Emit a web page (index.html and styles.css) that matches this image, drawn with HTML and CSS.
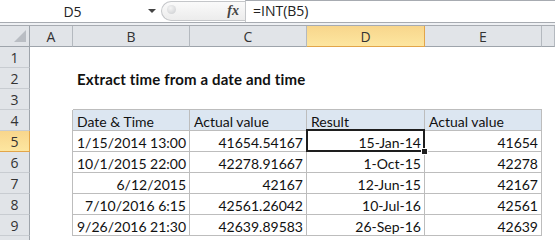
FILE: index.html
```html
<!DOCTYPE html>
<html lang="en">
<head>
  <meta charset="UTF-8" />
  <title>Extract time from a date and time</title>
  <link rel="stylesheet" href="styles.css">
</head>
<body>
  <div class="app">
    <div class="formula-bar">
      <div class="name-box">
        <span class="name">D5</span>
        <span class="caret"></span>
      </div>
      <div class="fx-box">
        <span class="grip"></span>
        <span class="fx">fx</span>
      </div>
      <div class="formula">=INT(B5)</div>
    </div>
    <div class="bar-gap"></div>

    <div class="sheet">
      <!-- column headers -->
      <div class="corner">
        <svg width="12" height="12" viewBox="0 0 12 12"><polygon points="12,0 12,12 0,12" fill="#b9bdc3"/></svg>
      </div>
      <div class="hd">A</div>
      <div class="hd">B</div>
      <div class="hd">C</div>
      <div class="hd sel">D</div>
      <div class="hd">E</div>
      <div class="hd"></div>

      <!-- row 1 -->
      <div class="rh">1</div>
      <div class="c"></div><div class="c"></div><div class="c"></div><div class="c"></div><div class="c"></div><div class="c"></div>

      <!-- row 2 -->
      <div class="rh">2</div>
      <div class="c"></div>
      <div class="c title">Extract time from a date and time</div>
      <div class="c"></div><div class="c"></div><div class="c"></div><div class="c"></div>

      <!-- row 3 -->
      <div class="rh">3</div>
      <div class="c"></div>
      <div class="c above"></div><div class="c above"></div><div class="c above"></div><div class="c above"></div>
      <div class="c"></div>

      <!-- row 4 -->
      <div class="rh">4</div>
      <div class="c before"></div>
      <div class="c t th">Date &amp; Time</div>
      <div class="c t th">Actual value</div>
      <div class="c t th">Result</div>
      <div class="c t th">Actual value</div>
      <div class="c"></div>

      <!-- row 5 -->
      <div class="rh sel">5</div>
      <div class="c before"></div>
      <div class="c t num">1/15/2014 13:00</div>
      <div class="c t num">41654.54167</div>
      <div class="c t num active">15-Jan-14</div>
      <div class="c t num">41654</div>
      <div class="c"></div>

      <!-- row 6 -->
      <div class="rh">6</div>
      <div class="c before"></div>
      <div class="c t num">10/1/2015 22:00</div>
      <div class="c t num">42278.91667</div>
      <div class="c t num">1-Oct-15</div>
      <div class="c t num">42278</div>
      <div class="c"></div>

      <!-- row 7 -->
      <div class="rh">7</div>
      <div class="c before"></div>
      <div class="c t num">6/12/2015</div>
      <div class="c t num">42167</div>
      <div class="c t num">12-Jun-15</div>
      <div class="c t num">42167</div>
      <div class="c"></div>

      <!-- row 8 -->
      <div class="rh">8</div>
      <div class="c before"></div>
      <div class="c t num">7/10/2016 6:15</div>
      <div class="c t num">42561.26042</div>
      <div class="c t num">10-Jul-16</div>
      <div class="c t num">42561</div>
      <div class="c"></div>

      <!-- row 9 -->
      <div class="rh">9</div>
      <div class="c before"></div>
      <div class="c t num">9/26/2016 21:30</div>
      <div class="c t num">42639.89583</div>
      <div class="c t num">26-Sep-16</div>
      <div class="c t num">42639</div>
      <div class="c"></div>

      <!-- row 10 (only its top edge is visible) -->
      <div class="rh"></div>
      <div class="c"></div><div class="c"></div><div class="c"></div><div class="c"></div><div class="c"></div><div class="c"></div>
    </div>
  </div>
</body>
</html>
```

FILE: styles.css
```css
body {
  margin: 0;
  background: white;
  font-family: Lato, "Liberation Sans", sans-serif;
}

.app {
  width: 555px;
  height: 240px;
  overflow: hidden;
}

/* Barre de formule */
.formula-bar {
  display: flex;
  height: 23px;
  box-sizing: border-box;
  border-bottom: 1px solid #a7abb1;
}

.name-box {
  width: 161px;
  display: flex;
  align-items: center;
  flex-shrink: 0;
}

.name {
  width: 145px;
  text-align: center;
  font-family: "Open Sans", sans-serif;
  font-size: 14px;
  color: #222;
}

.caret {
  margin-left: 3px;
  border-left: 4px solid transparent;
  border-right: 4px solid transparent;
  border-top: 4px solid #444;
}

.fx-box {
  width: 84px;
  margin: 1px 0;
  box-sizing: border-box;
  border: 1px solid #c4c6c9;
  border-right: none;
  border-radius: 11px 0 0 11px;
  background: linear-gradient(#fafafa, #ececec);
  display: flex;
  align-items: center;
  justify-content: space-between;
  padding: 0 6px 0 5px;
  flex-shrink: 0;
}

.grip {
  width: 9px;
  height: 9px;
  border-radius: 50%;
  background: radial-gradient(circle at 40% 35%, #f4f4f4, #c9cbce);
  margin-top: -3px;
}

.fx {
  font-family: "Liberation Serif", serif;
  font-style: italic;
  font-weight: bold;
  font-size: 14px;
  color: #444;
}

.formula {
  flex: 1;
  border-left: 1px solid #c4c6c9;
  border-top: 1px solid #a7abb1;
  padding-left: 7px;
  font-family: "Open Sans", sans-serif;
  font-size: 14px;
  line-height: 20px;
  color: #222;
}

.bar-gap {
  height: 3px;
  box-sizing: border-box;
  background: #eef0f3;
  border-bottom: 1px solid #a7abb1;
}

/* Grille */
.sheet {
  display: grid;
  grid-template-columns: 30px 43px 117px 117px 118px 117px 13px;
  grid-auto-rows: 21px;
}

.corner,
.hd,
.rh {
  background: #e1e4e8;
  box-sizing: border-box;
  font-family: "Open Sans", sans-serif;
  font-size: 14px;
  color: #333;
  display: flex;
  align-items: center;
  justify-content: center;
}

.corner {
  border-right: 1px solid #9ea4ab;
  border-bottom: 1px solid #9ea4ab;
  justify-content: flex-end;
  align-items: flex-end;
  padding: 0 3px 4px 0;
}

.hd {
  border-right: 1px solid #b4b9bf;
  border-bottom: 1px solid #9ea4ab;
}

.rh {
  border-right: 1px solid #9ea4ab;
  border-bottom: 1px solid #c8ccd1;
}

.hd.sel,
.rh.sel {
  background: linear-gradient(#f8d68c, #fde6a0);
  border-color: #e2a54a;
}

.c {
  box-sizing: border-box;
  font-size: 14px;
  color: #111;
  padding: 2px 3px 0 4px;
  line-height: 19px;
  white-space: nowrap;
  position: relative;
}

.title {
  font-weight: bold;
  font-size: 15px;
  letter-spacing: 0.15px;
  overflow: visible;
}

/* Bordures du tableau */
.above {
  border-bottom: 1px solid #bdbdbd;
}

.before {
  border-right: 1px solid #bdbdbd;
}

.t {
  border-right: 1px solid #bdbdbd;
  border-bottom: 1px solid #bdbdbd;
}

.th {
  background: #dce6f1;
}

.num {
  text-align: right;
}

/* Cellule active */
.active::after {
  content: "";
  position: absolute;
  top: -2px;
  left: -1px;
  right: -1px;
  bottom: -1px;
  border: 2px solid #1e1e1e;
}

.active::before {
  content: "";
  position: absolute;
  right: -4px;
  bottom: -4px;
  width: 5px;
  height: 5px;
  background: #1e1e1e;
  border: 1px solid white;
  z-index: 1;
}
```
